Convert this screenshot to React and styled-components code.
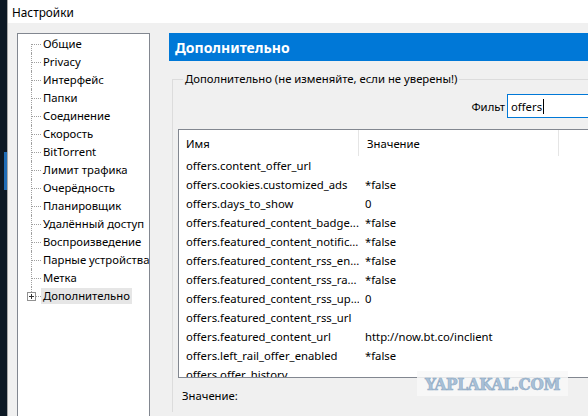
import React from 'react';
import styled, { createGlobalStyle } from 'styled-components';

const GlobalStyle = createGlobalStyle`
  html, body { margin: 0; padding: 0; }
  body {
    font-family: "Noto Sans", "Liberation Sans", sans-serif;
    font-size: 11.3px;
    color: #000;
    background: #f0f0f0;
  }
`;

// Styled Components

const Screen = styled.div`
  width: 588px;
  height: 416px;
  overflow: hidden;
  display: flex;
  background: #f0f0f0;
  position: relative;
`;

const DesktopStrip = styled.div`
  width: 7px;
  flex: none;
  background: #0d1925;
  display: flex;
  flex-direction: column;
  padding-top: 152px;
  box-sizing: border-box;
`;

const TaskMark = styled.div`
  width: 3px;
  height: 38px;
  margin-left: 4px;
  background: #1f6cb6;
`;

const Window = styled.div`
  flex: none;
  width: 640px;
  border-left: 1px solid #a9a9a9;
  display: flex;
  flex-direction: column;
`;

const TitleBar = styled.div`
  flex: none;
  height: 23px;
  background: #fff;
  display: flex;
  align-items: center;
  padding-left: 4px;
  font-size: 11.8px;
`;

const Body = styled.div`
  flex: none;
  display: flex;
  gap: 19px;
  padding: 10px 0 0 9px;
`;

const Tree = styled.div`
  width: 133px;
  height: 400px;
  box-sizing: border-box;
  flex: none;
  background: #fff;
  border: 1px solid #828790;
  overflow: hidden;
  padding: 1px 0 0 13px;
`;

const TreeItem = styled.div`
  height: 18px;
  display: flex;
  align-items: center;
  white-space: nowrap;
`;

const Connector = styled.span`
  position: relative;
  width: 10px;
  height: 18px;
  flex: none;

  &::before {
    content: '';
    position: absolute;
    left: 0;
    top: ${p => (p.$first ? '9px' : '0')};
    height: ${p => (p.$first || p.$last ? '9px' : '18px')};
    border-left: 1px dotted #a0a0a0;
  }
  &::after {
    content: '';
    position: absolute;
    left: 1px;
    right: 0;
    top: 9px;
    border-top: 1px dotted #a0a0a0;
  }
`;

const Expander = styled.span`
  position: absolute;
  left: -4px;
  top: 5px;
  width: 9px;
  height: 9px;
  box-sizing: border-box;
  border: 1px solid #919191;
  background: #fff;
  z-index: 1;

  &::before {
    content: '';
    position: absolute;
    left: 1px;
    top: 3px;
    width: 5px;
    height: 1px;
    background: #333;
  }
  &::after {
    content: '';
    position: absolute;
    left: 3px;
    top: 1px;
    width: 1px;
    height: 5px;
    background: #333;
  }
`;

const ItemLabel = styled.span`
  padding: 0 2px;
  line-height: 16px;
  background: ${p => (p.$selected ? '#e6e6e6' : 'transparent')};
`;

const Panel = styled.div`
  width: 460px;
  flex: none;
  display: flex;
  flex-direction: column;
`;

const PanelHeader = styled.div`
  height: 28px;
  background: #0078d7;
  color: #fff;
  font-weight: bold;
  font-size: 14px;
  display: flex;
  align-items: center;
  padding-left: 6px;
`;

const Group = styled.fieldset`
  margin: 10px 0 0 3px;
  padding: 0 0 0 5px;
  border: 1px solid #dcdcdc;
  border-right: none;
  border-bottom: none;
  min-width: 0;
  height: 340px;
`;

const Legend = styled.legend`
  padding: 0 2px;
  margin-left: 5px;
  line-height: 16px;
`;

const FilterRow = styled.div`
  display: flex;
  justify-content: flex-end;
  align-items: center;
  gap: 2px;
  margin-top: 7px;
  padding-right: 12px;
`;

const FilterBox = styled.div`
  width: 110px;
  height: 24px;
  box-sizing: border-box;
  border: 1px solid #0078d7;
  background: #fff;
  display: flex;
  align-items: center;
  padding-left: 3px;
`;

const Caret = styled.span`
  width: 1px;
  height: 15px;
  background: #000;
  margin-left: 1px;
`;

const List = styled.div`
  margin-top: 11px;
  height: 249px;
  box-sizing: border-box;
  border: 1px solid #828790;
  border-right: none;
  background: #fff;
  overflow: hidden;
  display: grid;
  grid-template-columns: 180px 200px 1fr;
  grid-auto-rows: 19px;
  grid-template-rows: 26px;
  white-space: nowrap;
`;

const HeadCell = styled.div`
  display: flex;
  align-items: center;
  padding-left: ${p => p.$pad}px;
  border-right: ${p => (p.$divider ? '1px solid #e5e5e5' : 'none')};
`;

const Cell = styled.div`
  display: flex;
  align-items: center;
  padding-left: ${p => p.$pad}px;
  overflow: hidden;
`;

const FieldLabel = styled.div`
  margin-top: 10px;
  padding-left: 4px;
  line-height: 16px;
`;

const Watermark = styled.div`
  position: absolute;
  left: 417px;
  top: 371px;
  width: 151px;
  height: 25px;
  background: rgba(248, 248, 248, 0.85);
  display: flex;
  align-items: center;
  justify-content: center;
  font-family: "DejaVu Serif Condensed", "DejaVu Serif", serif;
  font-weight: bold;
  font-size: 17px;
  letter-spacing: -0.3px;
  color: #a9c1d8;
  -webkit-text-stroke: 0.6px #8ea9c3;
`;

const sections = [
  'Общие', 'Privacy', 'Интерфейс', 'Папки', 'Соединение', 'Скорость',
  'BitTorrent', 'Лимит трафика', 'Очерёдность', 'Планировщик',
  'Удалённый доступ', 'Воспроизведение', 'Парные устройства', 'Метка',
  'Дополнительно',
];

const rows = [
  ['offers.content_offer_url', ''],
  ['offers.cookies.customized_ads', '*false'],
  ['offers.days_to_show', '0'],
  ['offers.featured_content_badge...', '*false'],
  ['offers.featured_content_notific...', '*false'],
  ['offers.featured_content_rss_en...', '*false'],
  ['offers.featured_content_rss_ra...', '*false'],
  ['offers.featured_content_rss_up...', '0'],
  ['offers.featured_content_rss_url', ''],
  ['offers.featured_content_url', 'http://now.bt.co/inclient'],
  ['offers.left_rail_offer_enabled', '*false'],
  ['offers.offer_history', ''],
];

export default function App() {
  return (
    <>
      <GlobalStyle />
      <Screen>
        <DesktopStrip>
          <TaskMark />
        </DesktopStrip>
        <Window>
          <TitleBar>Настройки</TitleBar>
          <Body>
            <Tree>
              {sections.map((name, i) => {
                const last = i === sections.length - 1;
                return (
                  <TreeItem key={name}>
                    <Connector $first={i === 0} $last={last}>
                      {last && <Expander />}
                    </Connector>
                    <ItemLabel $selected={last}>{name}</ItemLabel>
                  </TreeItem>
                );
              })}
            </Tree>
            <Panel>
              <PanelHeader>Дополнительно</PanelHeader>
              <Group>
                <Legend>Дополнительно (не изменяйте, если не уверены!)</Legend>
                <FilterRow>
                  <span>Фильт</span>
                  <FilterBox>
                    offers<Caret />
                  </FilterBox>
                </FilterRow>
                <List>
                  <HeadCell $pad={7} $divider>Имя</HeadCell>
                  <HeadCell $pad={8} $divider>Значение</HeadCell>
                  <HeadCell />
                  {rows.map(([name, value]) => (
                    <React.Fragment key={name}>
                      <Cell $pad={7}>{name}</Cell>
                      <Cell $pad={6}>{value}</Cell>
                      <Cell />
                    </React.Fragment>
                  ))}
                </List>
                <FieldLabel>Значение:</FieldLabel>
              </Group>
            </Panel>
          </Body>
        </Window>
        <Watermark>YAPLAKAL.COM</Watermark>
      </Screen>
    </>
  );
}
